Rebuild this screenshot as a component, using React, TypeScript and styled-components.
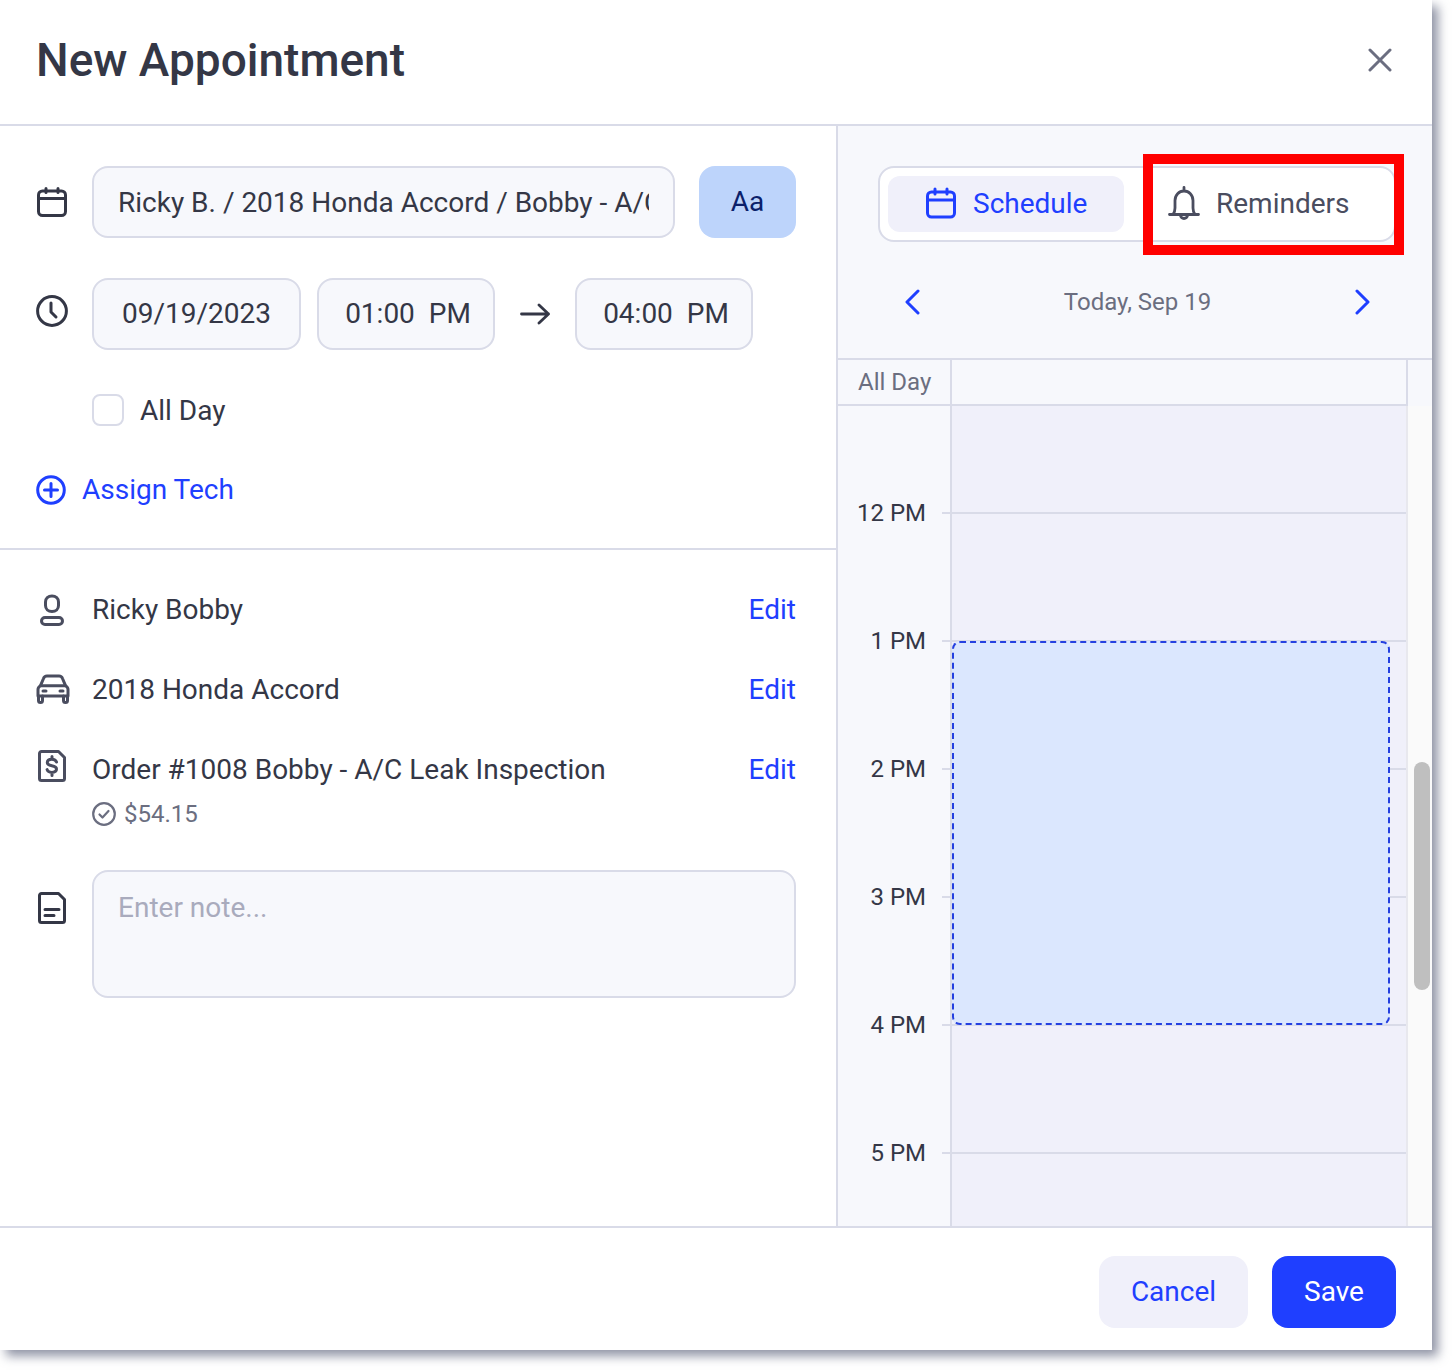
import styled, { createGlobalStyle } from 'styled-components'

const GlobalStyle = createGlobalStyle`
  html, body {
    margin: 0;
    padding: 0;
    background: #fff;
  }
  body {
    font-family: Roboto, "Liberation Sans", sans-serif;
    font-size: 28px;
    color: #343746;
  }
  * {
    box-sizing: border-box;
  }
`

const HOURS = ['12 PM', '1 PM', '2 PM', '3 PM', '4 PM', '5 PM']

const App = () => {
  return (
    <Page>
      <GlobalStyle />
      <Modal>
        <Header>
          <Title>New Appointment</Title>
          <CloseButton aria-label="Close">
            <svg width="24" height="24" viewBox="0 0 24 24" fill="none" stroke="#6b6e80" strokeWidth="3" strokeLinecap="round">
              <path d="M2 2l20 20M22 2L2 22" />
            </svg>
          </CloseButton>
        </Header>
        <Body>
          <LeftPane>
            <FormSection>
              <FormRow>
                <IconSlot>
                  <svg width="32" height="32" viewBox="0 0 32 32" fill="none" stroke="#343746" strokeWidth="3" strokeLinejoin="round" strokeLinecap="round">
                    <rect x="2.500" y="5" width="27" height="24.500" rx="4" />
                    <path d="M3 12.500h26M10 2.500v4M22 2.500v4" />
                  </svg>
                </IconSlot>
                <TitleInput readOnly value="Ricky B. / 2018 Honda Accord / Bobby - A/C Leak Inspection" />
                <AaButton>Aa</AaButton>
              </FormRow>
              <FormRow>
                <ClockSlot>
                  <svg width="32" height="32" viewBox="0 0 32 32" fill="none" stroke="#343746" strokeWidth="3" strokeLinecap="round" strokeLinejoin="round">
                    <circle cx="16" cy="16" r="14.400" />
                    <path d="M15 8v9l5 5" />
                  </svg>
                </ClockSlot>
                <DateField $width={209}>09/19/2023</DateField>
                <DateField $width={178} $gap={16} $time>01:00  PM</DateField>
                <ArrowSlot>
                  <svg width="30" height="22" viewBox="0 0 30 22" fill="none" stroke="#343746" strokeWidth="2.800" strokeLinecap="round" strokeLinejoin="round">
                    <path d="M1.500 11h27M19 2l9.500 9-9.500 9" />
                  </svg>
                </ArrowSlot>
                <DateField $width={178} $time>04:00  PM</DateField>
              </FormRow>
              <AllDayRow>
                <CheckBox />
                <span>All Day</span>
              </AllDayRow>
              <AssignLink>
                <svg width="30" height="30" viewBox="0 0 30 30" fill="none" stroke="#1f3fff" strokeWidth="3" strokeLinecap="round">
                  <circle cx="15" cy="15" r="13.300" />
                  <path d="M15 8.500v13M8.500 15h13" />
                </svg>
                <AssignLabel>Assign Tech</AssignLabel>
              </AssignLink>
            </FormSection>
            <DetailSection>
              <DetailRow>
                <DetailIcon>
                  <svg width="32" height="32" viewBox="0 0 32 32" fill="none" stroke="#4a4d5f" strokeWidth="3" strokeLinejoin="round">
                    <path d="M9.500 8c0-3.500 2.700-6 6.500-6s6.500 2.500 6.500 6v3.500c0 3.500-2.700 6-6.500 6s-6.500-2.500-6.500-6z" />
                    <rect x="5.500" y="23.500" width="21" height="7" rx="3.500" />
                  </svg>
                </DetailIcon>
                <DetailText>Ricky Bobby</DetailText>
                <EditLink>Edit</EditLink>
              </DetailRow>
              <DetailRow>
                <DetailIcon>
                  <svg width="34" height="30" viewBox="0 0 34 30" fill="none" stroke="#4a4d5f" strokeWidth="3" strokeLinecap="round" strokeLinejoin="round">
                    <path d="M2 22v-6.500c0-1.800 1-3 2.500-3.800L7.500 4.500C8 3 9.300 2 11 2h12c1.700 0 3 1 3.500 2.500l3 7.200c1.500.8 2.500 2 2.500 3.800V22z" />
                    <path d="M4.500 11.700h25M2.500 22v4.500a2 2 0 0 0 4 0V22M27.500 22v4.500a2 2 0 0 0 4 0V22M7 17h3M24 17h3" />
                  </svg>
                </DetailIcon>
                <DetailText>2018 Honda Accord</DetailText>
                <EditLink>Edit</EditLink>
              </DetailRow>
              <OrderRow>
                <DetailIcon>
                  <svg width="32" height="32" viewBox="0 0 32 32" fill="none" stroke="#4a4d5f" strokeWidth="3" strokeLinecap="round" strokeLinejoin="round">
                    <path d="M3.500 3.500a2 2 0 0 1 2-2h17l6 6V28.500a2 2 0 0 1-2 2h-21a2 2 0 0 1-2-2z" />
                    <path d="M20.500 12c-.6-1.800-2.300-2.800-4.700-2.800-2.600 0-4.500 1.300-4.500 3.300s1.900 2.800 4.500 3.300 4.700 1.300 4.700 3.300-2 3.300-4.700 3.300c-2.400 0-4.100-1-4.700-2.800M16 6.500v2.700M16 23v2.500" />
                  </svg>
                </DetailIcon>
                <OrderText>
                  <DetailText>Order #1008 Bobby - A/C Leak Inspection</DetailText>
                  <Amount>
                    <svg width="24" height="24" viewBox="0 0 24 24" fill="none" stroke="#6b6e80" strokeWidth="2.200" strokeLinecap="round" strokeLinejoin="round">
                      <circle cx="12" cy="12" r="10.800" />
                      <path d="M7.500 12.500l3 3 6-6.500" />
                    </svg>
                    $54.15
                  </Amount>
                </OrderText>
                <EditLink>Edit</EditLink>
              </OrderRow>
              <NoteRow>
                <NoteIcon>
                  <svg width="32" height="32" viewBox="0 0 32 32" fill="none" stroke="#343746" strokeWidth="3" strokeLinecap="round" strokeLinejoin="round">
                    <path d="M3.500 3.500a2 2 0 0 1 2-2h17l6 6V28.500a2 2 0 0 1-2 2h-21a2 2 0 0 1-2-2z" />
                    <path d="M9 17.500h14M9 23.500h9" />
                  </svg>
                </NoteIcon>
                <NoteInput placeholder="Enter note..." />
              </NoteRow>
            </DetailSection>
          </LeftPane>
          <RightPane>
            <TabsWrap>
              <Tabs>
                <Tab $active>
                  <svg width="32" height="32" viewBox="0 0 32 32" fill="none" stroke="#1f3fff" strokeWidth="3" strokeLinejoin="round" strokeLinecap="round">
                    <rect x="2.500" y="5" width="27" height="25" rx="4" />
                    <path d="M3 13h26M10 2v5M22 2v5" />
                  </svg>
                  Schedule
                </Tab>
                <Tab>
                  <svg width="32" height="36" viewBox="0 0 32 36" fill="none" stroke="#4a4d5f" strokeWidth="2.800" strokeLinecap="round" strokeLinejoin="round">
                    <path d="M1.500 29.500h29M5 29.500c1.500-2 2-3.500 2-6.500v-7.500C7 10 11 6 16 6s9 4 9 9.500V23c0 3 .5 4.500 2 6.500M16 2.500V6M12.500 30a3.500 3.500 0 0 0 7 0" />
                  </svg>
                  Reminders
                </Tab>
              </Tabs>
              <Highlight />
            </TabsWrap>
            <DayNav>
              <svg width="16" height="26" viewBox="0 0 16 26" fill="none" stroke="#1f3fff" strokeWidth="3" strokeLinecap="round" strokeLinejoin="round">
                <path d="M14 2L3 13l11 11" />
              </svg>
              <DayLabel>Today, Sep 19</DayLabel>
              <svg width="16" height="26" viewBox="0 0 16 26" fill="none" stroke="#1f3fff" strokeWidth="3" strokeLinecap="round" strokeLinejoin="round">
                <path d="M2 2l11 11L2 24" />
              </svg>
            </DayNav>
            <Calendar>
              <AllDayStrip>
                <AllDayLabel>All Day</AllDayLabel>
                <AllDayCell />
                <Gutter />
              </AllDayStrip>
              <Timeline>
                <TimeColumn>
                  {HOURS.map((hour) => (
                    <HourLabel key={hour}>{hour}</HourLabel>
                  ))}
                </TimeColumn>
                <HourColumn>
                  {HOURS.map((hour) => (
                    <HourCell key={hour} />
                  ))}
                  <EventBlock />
                </HourColumn>
                <ScrollGutter>
                  <ScrollThumb />
                </ScrollGutter>
              </Timeline>
            </Calendar>
          </RightPane>
        </Body>
        <Footer>
          <CancelButton>Cancel</CancelButton>
          <SaveButton>Save</SaveButton>
        </Footer>
      </Modal>
    </Page>
  )
}

const Page = styled.div`
  width: 1452px;
  height: 1370px;
  overflow: hidden;
`

const Modal = styled.div`
  width: 1432px;
  height: 1350px;
  background: #fff;
  display: flex;
  flex-direction: column;
  box-shadow: 6px 6px 10px rgba(70, 76, 105, 0.6);
`

const Header = styled.header`
  height: 126px;
  flex: none;
  display: flex;
  align-items: center;
  justify-content: space-between;
  padding: 0 40px 4px 36px;
  border-bottom: 2px solid #d9dbe8;
`

const Title = styled.h1`
  margin: 0;
  font-size: 46px;
  font-weight: 500;
  color: #343746;
`

const CloseButton = styled.button`
  border: 0;
  padding: 0;
  background: none;
  display: flex;
`

const Body = styled.div`
  flex: 1;
  min-height: 0;
  display: flex;
`

const LeftPane = styled.div`
  width: 838px;
  flex: none;
  border-right: 2px solid #d9dbe8;
`

const FormSection = styled.section`
  height: 424px;
  padding: 40px 40px 0 36px;
  border-bottom: 2px solid #d9dbe8;
`

const FormRow = styled.div`
  display: flex;
  align-items: center;
  height: 72px;
  margin-bottom: 40px;
`

const IconSlot = styled.div`
  width: 56px;
  flex: none;
  display: flex;
`

const ClockSlot = styled(IconSlot)`
  padding-bottom: 6px;
`

const fieldStyles = `
  height: 72px;
  background: #f7f8fc;
  border: 2px solid #d9dbe8;
  border-radius: 16px;
  color: #343746;
  font-family: Roboto, "Liberation Sans", sans-serif;
  font-size: 28px;
`

const TitleInput = styled.input`
  ${fieldStyles}
  width: 583px;
  padding: 0 24px;
  outline: none;
`

const AaButton = styled.button`
  width: 97px;
  height: 72px;
  margin-left: 24px;
  padding: 0 0 2px;
  border: 0;
  border-radius: 16px;
  background: #bdd4fb;
  color: #0b1f6b;
  font-family: inherit;
  font-size: 28px;
`

const DateField = styled.div<{ $width: number; $gap?: number; $time?: boolean }>`
  ${fieldStyles}
  width: ${(p) => p.$width}px;
  margin-left: ${(p) => p.$gap ?? 0}px;
  padding: 0 0 2px ${(p) => (p.$time ? 4 : 0)}px;
  display: flex;
  align-items: center;
  justify-content: center;
  white-space: pre;
`

const ArrowSlot = styled.div`
  width: 80px;
  display: flex;
  justify-content: center;
`

const AllDayRow = styled.label`
  display: flex;
  align-items: center;
  gap: 16px;
  height: 32px;
  margin: 44px 0 0 56px;
`

const CheckBox = styled.span`
  width: 32px;
  height: 32px;
  background: #fff;
  border: 2px solid #d9dbe8;
  border-radius: 8px;
`

const AssignLink = styled.a`
  display: flex;
  align-items: center;
  gap: 16px;
  height: 32px;
  margin-top: 48px;
  color: #1f3fff;
`

const AssignLabel = styled.span`
  padding-bottom: 2px;
`

const DetailSection = styled.section`
  padding: 40px 40px 0 36px;
`

const DetailRow = styled.div`
  display: flex;
  align-items: center;
  height: 40px;
  margin-bottom: 40px;
`

const OrderRow = styled.div`
  display: flex;
  align-items: flex-start;
  margin-bottom: 40px;
`

const DetailIcon = styled.div`
  width: 56px;
  height: 32px;
  flex: none;
  display: flex;
`

const DetailText = styled.div`
  flex: 1;
  line-height: 40px;
  color: #343746;
`

const OrderText = styled.div`
  flex: 1;
`

const Amount = styled.div`
  display: flex;
  align-items: center;
  gap: 8px;
  height: 32px;
  margin-top: 8px;
  font-size: 24px;
  color: #6b6e80;
`

const EditLink = styled.a`
  line-height: 40px;
  color: #1f3fff;
`

const NoteRow = styled.div`
  display: flex;
  align-items: flex-start;
`

const NoteIcon = styled.div`
  width: 56px;
  flex: none;
  display: flex;
  padding-top: 22px;
`

const NoteInput = styled.textarea`
  ${fieldStyles}
  flex: 1;
  height: 128px;
  padding: 19px 24px;
  resize: none;
  outline: none;

  &::placeholder {
    color: #a9abbd;
  }
`

const RightPane = styled.div`
  flex: 1;
  min-width: 0;
  display: flex;
  flex-direction: column;
  background: #f7f8fc;
`

const TabsWrap = styled.div`
  position: relative;
  margin: 40px 36px 0 40px;
`

const Tabs = styled.div`
  height: 76px;
  padding: 8px;
  display: flex;
  gap: 20px;
  background: #fff;
  border: 2px solid #d9dbe8;
  border-radius: 16px;
`

const Tab = styled.div<{ $active?: boolean }>`
  width: 236px;
  display: flex;
  align-items: center;
  gap: 16px;
  padding: 0 0 2px ${(p) => (p.$active ? 37 : 24)}px;
  border-radius: 12px;
  background: ${(p) => (p.$active ? '#f0f0fa' : 'transparent')};
  color: ${(p) => (p.$active ? '#1f3fff' : '#4a4d5f')};
`

const Highlight = styled.div`
  position: absolute;
  left: 265px;
  top: -12px;
  width: 261px;
  height: 101px;
  border: 10px solid #ff0000;
`

const DayNav = styled.div`
  height: 116px;
  flex: none;
  display: flex;
  align-items: center;
  justify-content: space-between;
  padding: 4px 61px 0 66px;
`

const DayLabel = styled.div`
  font-size: 24px;
  color: #6b6e80;
`

const Calendar = styled.div`
  flex: 1;
  min-height: 0;
  display: flex;
  flex-direction: column;
  border-top: 2px solid #d9dbe8;
  overflow: hidden;
`

const AllDayStrip = styled.div`
  height: 46px;
  flex: none;
  display: flex;
  border-bottom: 2px solid #d9dbe8;
`

const AllDayLabel = styled.div`
  width: 112px;
  padding-left: 20px;
  font-size: 24px;
  line-height: 44px;
  color: #6b6e80;
`

const AllDayCell = styled.div`
  width: 456px;
  border-left: 2px solid #d9dbe8;
`

const Gutter = styled.div`
  flex: 1;
  border-left: 2px solid #d9dbe8;
  margin-bottom: -2px;
  background: #f7f8fc;
`

const Timeline = styled.div`
  flex: 1;
  min-height: 0;
  display: flex;
`

const TimeColumn = styled.div`
  width: 112px;
  flex: none;
  padding-top: 93px;
`

const HourLabel = styled.div`
  height: 128px;
  padding-right: 24px;
  text-align: right;
  font-size: 24px;
  line-height: 28px;
  color: #343746;
  position: relative;

  &::after {
    content: '';
    position: absolute;
    right: 0;
    top: 13px;
    width: 8px;
    height: 2px;
    background: #d9dbe8;
  }
`

const HourColumn = styled.div`
  position: relative;
  width: 456px;
  flex: none;
  padding-top: 106px;
  background: #f0f0fa;
  border-left: 2px solid #d9dbe8;
`

const HourCell = styled.div`
  height: 128px;
  border-top: 2px solid #d9dbe8;
`

const EventBlock = styled.div`
  position: absolute;
  left: 0;
  top: 235px;
  width: 438px;
  height: 384px;
  background: #dbe7fe;
  border: 2px dashed #2440e0;
  border-radius: 8px;
`

const ScrollGutter = styled.div`
  position: relative;
  flex: 1;
  background: #fafafa;
  border-left: 2px solid #e8e8ee;
`

const ScrollThumb = styled.div`
  position: absolute;
  left: 6px;
  top: 356px;
  width: 16px;
  height: 228px;
  border-radius: 8px;
  background: #bfbfbf;
`

const Footer = styled.footer`
  height: 124px;
  flex: none;
  display: flex;
  justify-content: flex-end;
  align-items: flex-start;
  gap: 24px;
  padding: 28px 36px 0 0;
  border-top: 2px solid #d9dbe8;
`

const CancelButton = styled.button`
  width: 149px;
  height: 72px;
  padding: 0 0 2px;
  border: 0;
  border-radius: 16px;
  background: #f0f0fa;
  color: #1f3fff;
  font-family: inherit;
  font-size: 28px;
`

const SaveButton = styled.button`
  width: 124px;
  height: 72px;
  padding: 0 0 2px;
  border: 0;
  border-radius: 16px;
  background: #1f3fff;
  color: #fff;
  font-family: inherit;
  font-size: 28px;
`

export default App
